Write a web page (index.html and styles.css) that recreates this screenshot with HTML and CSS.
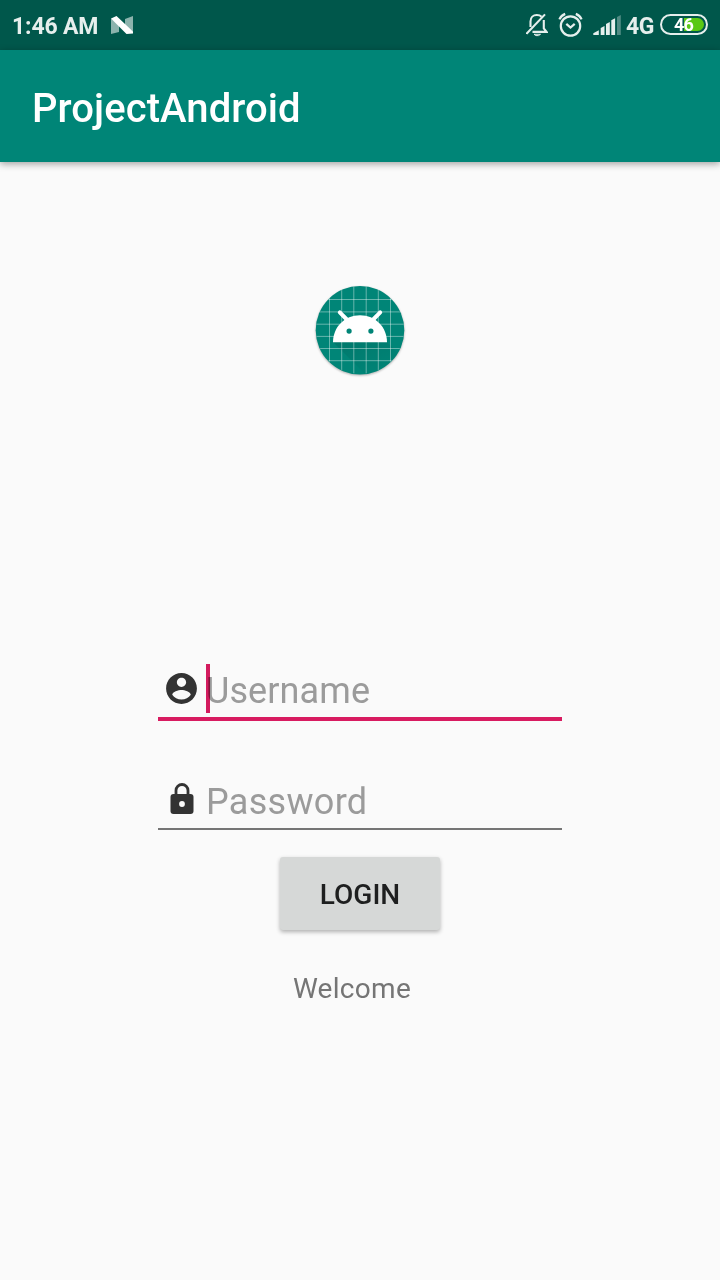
FILE: index.html
```html
<!DOCTYPE html>
<html lang="en">
<head>
<meta charset="utf-8">
<title>ProjectAndroid</title>
<link rel="stylesheet" href="styles.css">
</head>
<body>
<header class="status-bar">
  <span class="clock">1:46 AM</span>
  <svg class="nougat" width="22" height="18" viewBox="0 0 22 18">
    <path d="M0 2.500L8 8v8L0 18zM22 0v15.500L14 10V3z" fill="#fff" fill-opacity=".55"/>
    <path d="M0 2.500L5.500 0 22 15.500V17.500L15.500 18z" fill="#fff"/>
  </svg>
  <div class="indicators">
    <svg class="bell" width="22" height="24" viewBox="0 0 22 24" fill="none" stroke="#e6efed" stroke-width="2.100">
      <path d="M4.500 14V8.500C4.500 4.500 7.200 2 10.800 2c1.900 0 3.600.6 4.800 1.800M17.800 7v8.500l2.700 3.400H6.500"/>
      <path d="M.5 20.800L19 1.400"/>
      <path d="M8 21.300h6.500l-2 1.300h-2.500z" stroke-width="1"/>
    </svg>
    <svg class="alarm" width="25" height="25" viewBox="0 0 25 25" fill="none" stroke="#e6efed" stroke-width="2.200">
      <circle cx="12.500" cy="14" r="9.700"/>
      <path d="M8.300 11.800l4.200 3.700 4.200-3.700M1.400 7.400C2.500 5 4.300 3 7.200 1.900M23.600 7.400C22.500 5 20.700 3 17.800 1.900"/>
    </svg>
    <svg class="signal" width="28" height="20" viewBox="0 0 28 20" fill="#e6efed">
      <path d="M.3 20v-1.800l5.500-3V20zM7.700 20v-7l3.800-2v9zM13 20V9l3.800-2v13zM18.300 20V5.200l3.800-2V20z"/>
      <path d="M24 2l3.800-2v20H24z" fill-opacity=".35"/>
    </svg>
    <span class="network">4G</span>
    <div class="battery"><i class="charge"></i><span class="level">46</span></div>
  </div>
</header>
<div class="app-bar"><h1 class="title">ProjectAndroid</h1></div>
<main class="content">
  <svg class="logo" width="96" height="96" viewBox="312 282 96 96">
    <defs>
      <clipPath id="disc"><circle cx="360" cy="330" r="44"/></clipPath>
      <linearGradient id="shade" x1="0" y1="0" x2="1" y2="1"><stop offset="0" stop-opacity=".1"/><stop offset=".7" stop-opacity="0"/></linearGradient>
    </defs>
    <circle class="disc" cx="360" cy="330.200" r="44.300" fill="#008577"/>
    <g clip-path="url(#disc)">
      <path d="M333 342h54l40 40h-54z" fill="url(#shade)"/>
      <path d="M329.500 280v100M341.700 280v100M353.800 280v100M366.200 280v100M378.300 280v100M390.500 280v100M310 299.500h100M310 311.900h100M310 324.200h100M310 336.400h100M310 348.500h100M310 360.700h100" stroke="#fff" stroke-opacity=".4"/>
    </g>
    <path d="M333 342.200c0-15 11.500-27 27-27s27 12 27 27z" fill="#fff"/>
    <path d="M339.800 312.400l7.500 7.600M380.200 312.400l-7.500 7.600" stroke="#fff" stroke-width="4" stroke-linecap="round"/>
    <circle cx="349.100" cy="331.100" r="2.600" fill="#008577"/><circle cx="370.900" cy="331.100" r="2.600" fill="#008577"/>
  </svg>
  <form class="form">
    <div class="field focused">
      <svg class="field-icon" width="37" height="37" viewBox="0 0 24 24"><path fill="#333" d="M12 2C6.480 2 2 6.480 2 12s4.480 10 10 10 10-4.480 10-10S17.520 2 12 2zm0 3c1.660 0 3 1.340 3 3s-1.340 3-3 3-3-1.340-3-3 1.340-3 3-3zm0 14.200c-2.500 0-4.710-1.280-6-3.220.03-1.990 4-3.080 6-3.080 1.990 0 5.970 1.090 6 3.080-1.290 1.940-3.500 3.220-6 3.220z"/></svg>
      <span class="hint">Username</span>
      <i class="caret"></i>
    </div>
    <div class="field">
      <svg class="field-icon lock" width="36" height="36" viewBox="0 0 36 36">
        <path d="M12 14V9.500a6 6 0 0 1 12 0V14" fill="none" stroke="#333" stroke-width="2.800"/>
        <rect x="6.500" y="13" width="23" height="20" rx="3" fill="#333"/>
        <circle cx="18" cy="23" r="2.900" fill="#fafafa"/>
      </svg>
      <span class="hint">Password</span>
    </div>
    <button class="login" type="button">LOGIN</button>
  </form>
  <p class="message">Welcome</p>
</main>
</body>
</html>
```
FILE: styles.css
```css
* { box-sizing: border-box; }
body {
  margin: 0;
  height: 1280px;
  overflow: hidden;
  background: #fafafa;
  font-family: Roboto, sans-serif;
}
svg { display: block; flex: none; }
.status-bar {
  display: flex;
  height: 50px;
  padding: 0 12px;
  align-items: center;
  background: #00574b;
  color: #e6efed;
}
.clock {
  width: 99px;
  padding-top: 3px;
  font-size: 23px;
  font-weight: 700;
  line-height: 28px;
  letter-spacing: -.15px;
  white-space: nowrap;
}
.indicators { display: flex; margin-left: auto; align-items: center; }
.bell { margin-bottom: 1px; }
.alarm { margin: 0 0 2px 10px; }
.signal { margin-left: 10px; }
.network {
  width: 27px;
  margin: 3px 7px 0 5px;
  font-size: 23px;
  font-weight: 700;
  line-height: 28px;
  letter-spacing: -.4px;
}
.battery {
  position: relative;
  width: 48px;
  height: 21px;
  margin-bottom: 1px;
  border: 2px solid #e6efed;
  border-radius: 11px;
}
.charge {
  position: absolute;
  top: 2px;
  right: 2px;
  bottom: 2px;
  width: 20px;
  background: #5ac814;
  border-radius: 0 7px 7px 0;
}
.level {
  position: relative;
  display: block;
  padding-right: 1px;
  color: #fff;
  font-size: 18px;
  font-weight: 700;
  line-height: 18px;
  letter-spacing: -.8px;
  text-align: center;
}
.app-bar {
  display: flex;
  height: 112px;
  padding: 6px 32px 0;
  align-items: center;
  background: #008577;
  box-shadow: 0 2px 7px rgba(0, 0, 0, .36);
}
.title { margin: 0; color: #fff; font-size: 40px; font-weight: 500; line-height: 48px; letter-spacing: .08px; }
.content { display: flex; flex-direction: column; align-items: center; padding-top: 120px; }
.disc { filter: drop-shadow(0 1.500px 1px rgba(0, 0, 0, .3)); }
.form { display: flex; width: 404px; margin-top: 286px; flex-direction: column; align-items: center; }
.field {
  position: relative;
  display: flex;
  width: 404px;
  height: 55px;
  padding-left: 6px;
  align-items: flex-start;
  border-bottom: 2px solid #757575;
}
.field.focused { height: 57px; margin-bottom: 54px; padding-left: 5px; border-bottom: 4px solid #d81b60; }
.field-icon { margin-top: 6px; }
.focused .field-icon { margin-top: 5.500px; }
.hint { margin: 6px 0 0 6px; color: #9b9b9b; font-size: 36px; line-height: 42px; letter-spacing: .3px; }
.focused .hint { letter-spacing: .1px; }
.caret { position: absolute; top: 0; left: 48px; width: 4px; height: 49px; background: #d81b60; mix-blend-mode: multiply; }
.login {
  width: 160px;
  height: 73px;
  margin-top: 27px;
  padding: 2px 0 0;
  border: 0;
  border-radius: 3px;
  background: #d6d8d7;
  box-shadow: 0 2px 4px rgba(0, 0, 0, .3);
  color: #1e1f1f;
  font: 500 28px/34px Roboto, sans-serif;
}
.message { margin: 42px 16px 0 0; color: #757575; font-size: 28px; line-height: 34px; letter-spacing: .3px; }
```
